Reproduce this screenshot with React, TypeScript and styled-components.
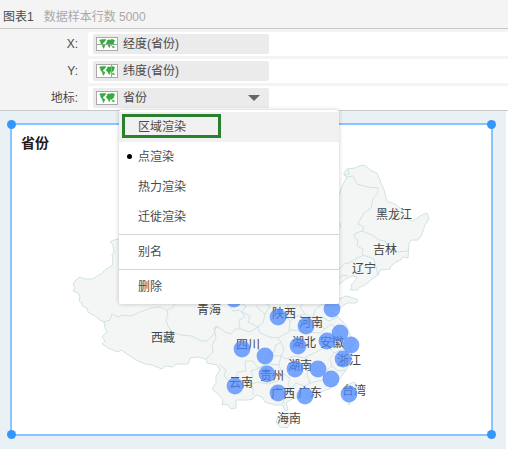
import React from "react";
import styled, { createGlobalStyle } from "styled-components";

const GlobalStyle = createGlobalStyle`
  * { box-sizing: border-box; }
  body {
    margin: 0;
    background: #fff;
    color: #4a4a4a;
    font: 12px/18px "Liberation Sans", "Noto Sans CJK SC", sans-serif;
  }
  button { font: inherit; color: inherit; }
`;

const Page = styled.main`
  display: flex;
  flex-direction: column;
`;

const Header = styled.header`
  display: flex;
  align-items: flex-end;
  gap: 10px;
  height: 29px;
  padding: 0 3px 2px;
  background: #f4f4f4;
  border-bottom: 1px solid #c8c8c8;
`;

const ChartName = styled.h1`
  margin: 0;
  font-size: 12px;
  font-weight: 400;
`;

const SampleInfo = styled.span`
  color: #aaa;
`;

const Shelves = styled.section`
  display: flex;
  flex-direction: column;
  gap: 3px;
  padding-top: 3px;
  background: #f4f4f4;
  border-bottom: 1px solid #c8c8c8;
`;

const ShelfRow = styled.div`
  display: grid;
  grid-template-columns: 88px 1fr;
  height: 24px;
`;

const ShelfLabel = styled.span`
  padding-right: 10px;
  line-height: 24px;
  text-align: right;
`;

const DropZone = styled.div`
  display: flex;
  align-items: flex-start;
  padding: 2px 5px;
  background: #fff;
  border-radius: 2px 0 0 2px;
`;

const PillWrap = styled.div`
  position: relative;
  width: 176px;
`;

const Pill = styled.button`
  display: flex;
  align-items: center;
  gap: 5px;
  width: 100%;
  height: 20px;
  padding: 0 9px 0 3px;
  border: 0;
  border-radius: 2px;
  background: #ebebeb;
  text-align: left;
`;

const PillText = styled.span`
  flex: 1;
`;

const Menu = styled.div`
  position: absolute;
  z-index: 2;
  top: 100%;
  left: 26px;
  width: 220px;
  margin-top: 2px;
  padding: 2px 0;
  background: #fff;
  border-radius: 2px;
  box-shadow: 0 0 4px rgba(0, 0, 0, 0.22);
`;

const MenuItem = styled.button<{ $hovered?: boolean }>`
  position: relative;
  display: flex;
  align-items: center;
  width: 100%;
  height: 30px;
  padding: 0 19px;
  border: 0;
  background: ${(p) => (p.$hovered ? "#f1f1f1" : "transparent")};
  text-align: left;
`;

const CheckedDot = styled.span`
  position: absolute;
  top: 12px;
  left: 8px;
  width: 5px;
  height: 5px;
  border-radius: 50%;
  background: #000;
`;

const Highlight = styled.span`
  position: absolute;
  top: 2px;
  left: 3px;
  width: 99px;
  height: 24px;
  border: 3px solid #2b802f;
`;

const Separator = styled.hr`
  height: 1px;
  margin: 2px 0;
  border: 0;
  background: #d4d4d4;
`;

const Canvas = styled.section`
  margin-right: 2px;
  padding: 12px 13px 13px 10px;
  background: #e9f1f4;
`;

const Widget = styled.article`
  position: relative;
  border: 2px solid #8bc3fc;
  background: #fff;
`;

const WidgetTitle = styled.h2`
  margin: 0;
  padding: 8px 9px 0;
  color: #231815;
  font-size: 14px;
  line-height: 20px;
  font-weight: 700;
`;

const Handle = styled.span<{ $v: "top" | "bottom"; $h: "left" | "right" }>`
  position: absolute;
  ${(p) => p.$v}: -5px;
  ${(p) => p.$h}: -5px;
  width: 9px;
  height: 9px;
  border-radius: 50%;
  background: #3396ff;
`;

const MapSvg = styled.svg`
  display: block;
  width: 100%;
  height: auto;
`;

const Land = styled.path`
  fill: #f4f6f6;
  stroke: #cfe3e3;
  stroke-linejoin: round;
`;

const Border = styled.path`
  fill: none;
  stroke: #cfe3e3;
  stroke-linejoin: round;
`;

const Place = styled.text`
  fill: #444;
  font-size: 12px;
  text-anchor: middle;
`;

const Point = styled.circle`
  fill: #4c88ff;
  fill-opacity: 0.74;
`;

type Line = "h" | "v" | undefined;

function MapIcon({ line }: { line?: Line }) {
  return (
    <svg width="22" height="14" viewBox="0 0 22 14" aria-hidden="true">
      <rect x=".5" y=".5" width="21" height="13" fill="#fff" stroke="#a9a9a9" />
      <path
        fill="#35ab3a"
        stroke="#35ab3a"
        strokeWidth=".4"
        d="M3.5 3L6 2.4L9.8 2.3L9.2 4L7.8 5.3L6.8 6.5L7.5 7.6L9 8.3L8.5 9.8L7.4 11.6L6.6 9.5L6.2 7.8L4.8 6.5L4.4 4.5Z
           M11 3.6L12.5 2.8L14 3L16 2.3L18.8 3.3L18 5L17.6 7L16.4 7.6L15.6 8.8L14.8 7.6L14.2 8.4L13.4 10.8L12.2 9L11.8 7.7L10.5 7L10.3 5.4L11.3 4.8Z
           M16.2 9.2L18 9.2L18.4 10.8L16.5 10.6Z"
      />
      {line === "h" && <path d="M1 7.5H21" stroke="#8fa99a" />}
      {line === "v" && <path d="M15.5 1V13" stroke="#8fa99a" />}
    </svg>
  );
}

function Caret() {
  return (
    <svg width="12" height="6" viewBox="0 0 12 6" aria-hidden="true">
      <path d="M0 0H12L6 6Z" fill="#666" />
    </svg>
  );
}

const MAINLAND =
  "M119 239L114 240L110 242L113 245L114 252L112 255L113 262L112 266L106 269L101 274L97 276L93 279L85 279L80 277L76 280L73 284L75 288L73 291L78 293L80 297L79 301L82 303L82 306L87 308L88 312L95 316L100 320L104 322L105 328L107 332L102 337L105 341L102 344L110 349L118 352L121 350L130 356L138 361L145 364L152 365L162 369L165 366L173 367L176 364L188 364L190 358L198 357L206 359L207 363L217 365L220 370L216 376L216 383L212 389L219 395L223 400L222 405L227 404L231 409L236 408L236 400L248 400L253 399L256 395L262 397L265 402L275 405L283 405L285 411L288 410L286 403L292 399L300 397L310 399L318 393L329 389L336 383L341 377L346 370L351 362L352 353L350 347L355 343L350 335L346 325L338 317L333 312L340 308L347 303L356 303L358 300L350 297L346 296L339 299L332 296L325 290L338 285L346 279L352 276L357 277L355 281L351 285L352 287L350 290L357 290L360 287L365 285L372 279L378 275L380 270L390 269L391 266L396 262L401 260L403 257L408 258L409 243L412 240L418 240L422 234L425 225L429 219L427 213L420 216L413 221L407 219L402 210L395 204L387 201L384 190L381 183L377 173L370 170L366 166L362 165L355 168L347 169L344 173L344 175L347 177L342 186L339 195L300 210L220 225Z";

const BORDERS = [
  "M347 177L353 176L357 184L368 187L378 188L378 193L373 198L371 208L364 213L360 220L358 224L364 227L362 231L354 234L355 238L358 240L357 246L363 249L362 255L369 257L374 259L376 267L378 275",
  "M344 175L349 174L348 169M339 229L341 227L339 222",
  "M362 231L372 235L379 240L385 241L390 249L397 252L408 251",
  "M362 256L355 259L349 263L344 264L339 269M339 278L343 275L348 276",
  "M104 322L110 320L112 314L118 317L123 315L131 316L140 312L151 308L160 307L167 310L172 308L175 304",
  "M167 310L168 315L166 320L168 326L172 332L180 335L192 336L201 341L207 341L214 334L216 326L220 328",
  "M206 359L213 352L212 345L216 338L214 328L218 327L225 332L231 334L235 329L240 329L239 320L245 317L240 310L233 311L228 304",
  "M219 364L226 370L224 376L230 382L235 380L238 372L246 371L245 361L253 361L258 368L263 366",
  "M240 329L250 332L258 327L260 333L270 337L278 338L281 342L276 345L274 352L269 354L262 367L251 371L253 376L248 381L253 387L253 395",
  "M242 304L246 306L242 312L250 316L248 322L258 327L263 323L265 314L270 306L266 304",
  "M265 314L259 309L256 305M288 304L287 317L290 321L289 332L281 336L278 338",
  "M290 321L297 316L305 314L313 318L322 317L318 323L325 329L320 333L309 332L300 331L290 330",
  "M305 314L300 307L303 304M322 317L329 321L338 317M325 329L331 324L337 329L342 339L338 345L330 348L322 343L322 336",
  "M281 342L284 350L281 356L286 359L294 356L304 358L314 353L322 349L330 348L334 353L330 359L332 366L324 372L323 380L326 387",
  "M281 356L279 365L282 373L278 381L268 384L258 382L248 385M307 358L309 366L307 375L310 383L304 386L296 383L291 388L288 385L290 378L282 373",
  "M291 388L293 395L284 399L283 404M310 383L318 381L323 380M332 366L338 371L345 370M334 353L341 350L350 347",
  "M263 366L270 364L279 365M269 354L276 356L281 356M313 318L315 310L322 304L328 306",
];

const POINTS = [
  [234, 299], [278, 317], [332, 309], [306, 326], [340, 333], [327, 341], [351, 345],
  [298, 346], [242, 349], [265, 356], [343, 359], [295, 369], [318, 369], [267, 374],
  [331, 379], [235, 386], [278, 393], [305, 396], [349, 394],
];

const PLACES: [string, number, number][] = [
  ["黑龙江", 394, 219], ["吉林", 385, 254], ["辽宁", 364, 273], ["青海", 209, 314],
  ["西藏", 163, 342], ["陕西", 284, 318], ["河南", 311, 327], ["四川", 248, 349],
  ["湖北", 304, 347], ["安徽", 332, 347], ["浙江", 349, 365], ["湖南", 300, 370],
  ["贵州", 272, 380], ["云南", 241, 387], ["广西", 283, 398], ["广东", 310, 397],
  ["台湾", 354, 395], ["海南", 289, 423],
];

function ProvinceMap() {
  return (
    <MapSvg viewBox="12 153 479 281" role="img" aria-label="省份">
      <Land d={MAINLAND} />
      <Land d="M284 415L289 413L294 416L292 421L287 428L280 427L276 422L278 417Z" />
      <Land d="M354 382L357 385L353 397L349 405L345 398L344 391L349 384Z" />
      {BORDERS.map((d) => (
        <Border key={d} d={d} />
      ))}
      {PLACES.map(([name, x, y]) => (
        <Place key={name} x={x} y={y}>{name}</Place>
      ))}
      {POINTS.map(([x, y]) => (
        <Point key={`${x}-${y}`} cx={x} cy={y} r="8.4" />
      ))}
    </MapSvg>
  );
}

function RenderMenu() {
  return (
    <Menu role="menu">
      <MenuItem role="menuitem" $hovered>
        区域渲染
        <Highlight />
      </MenuItem>
      <MenuItem role="menuitem">
        <CheckedDot />
        点渲染
      </MenuItem>
      <MenuItem role="menuitem">热力渲染</MenuItem>
      <MenuItem role="menuitem">迁徙渲染</MenuItem>
      <Separator />
      <MenuItem role="menuitem">别名</MenuItem>
      <Separator />
      <MenuItem role="menuitem">删除</MenuItem>
    </Menu>
  );
}

interface ShelfProps {
  id: string;
  label: string;
  field: string;
  line?: Line;
  open?: boolean;
}

function Shelf({ id, label, field, line, open }: ShelfProps) {
  return (
    <ShelfRow>
      <ShelfLabel id={id}>{label}</ShelfLabel>
      <DropZone>
        <PillWrap>
          <Pill type="button" aria-describedby={id} aria-haspopup="menu" aria-expanded={!!open}>
            <MapIcon line={line} />
            <PillText>{field}</PillText>
            {open && <Caret />}
          </Pill>
          {open && <RenderMenu />}
        </PillWrap>
      </DropZone>
    </ShelfRow>
  );
}

export default function App() {
  return (
    <Page>
      <GlobalStyle />
      <Header>
        <ChartName>图表1</ChartName>
        <SampleInfo>数据样本行数 5000</SampleInfo>
      </Header>
      <Shelves>
        <Shelf id="shelf-x" label="X:" field="经度(省份)" line="h" />
        <Shelf id="shelf-y" label="Y:" field="纬度(省份)" line="v" />
        <Shelf id="shelf-mark" label="地标:" field="省份" open />
      </Shelves>
      <Canvas>
        <Widget>
          <WidgetTitle>省份</WidgetTitle>
          <ProvinceMap />
          <Handle $v="top" $h="left" />
          <Handle $v="top" $h="right" />
          <Handle $v="bottom" $h="left" />
          <Handle $v="bottom" $h="right" />
        </Widget>
      </Canvas>
    </Page>
  );
}
